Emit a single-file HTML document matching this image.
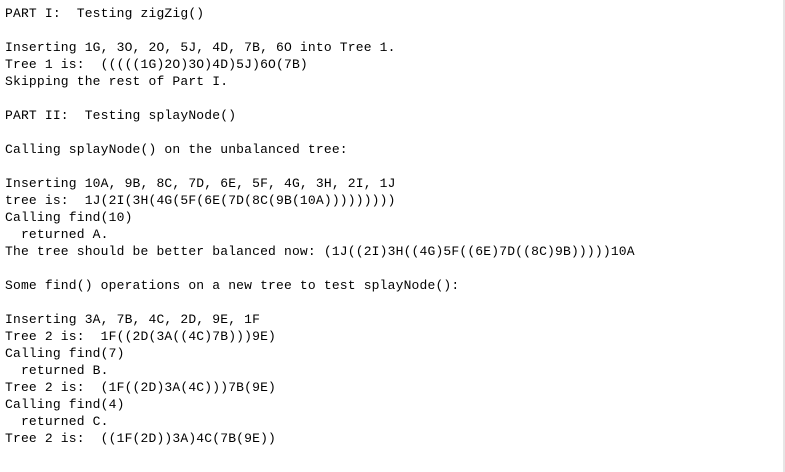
<!DOCTYPE html>
<html><head><meta charset="utf-8"><style>
html,body{margin:0;padding:0;background:#fff;width:785px;height:472px;overflow:hidden}
pre{margin:0;position:absolute;left:5px;top:5px;font-family:"Liberation Mono",monospace;font-size:13px;letter-spacing:0.17px;line-height:17px;color:#000}
.bar{position:absolute;right:0;top:0;width:2px;height:472px;background:#e6e6e6}
</style></head><body>
<pre>PART I:  Testing zigZig()

Inserting 1G, 3O, 2O, 5J, 4D, 7B, 6O into Tree 1.
Tree 1 is:  (((((1G)2O)3O)4D)5J)6O(7B)
Skipping the rest of Part I.

PART II:  Testing splayNode()

Calling splayNode() on the unbalanced tree:

Inserting 10A, 9B, 8C, 7D, 6E, 5F, 4G, 3H, 2I, 1J
tree is:  1J(2I(3H(4G(5F(6E(7D(8C(9B(10A)))))))))
Calling find(10)
  returned A.
The tree should be better balanced now: (1J((2I)3H((4G)5F((6E)7D((8C)9B)))))10A

Some find() operations on a new tree to test splayNode():

Inserting 3A, 7B, 4C, 2D, 9E, 1F
Tree 2 is:  1F((2D(3A((4C)7B)))9E)
Calling find(7)
  returned B.
Tree 2 is:  (1F((2D)3A(4C)))7B(9E)
Calling find(4)
  returned C.
Tree 2 is:  ((1F(2D))3A)4C(7B(9E))</pre>
<div class="bar"></div>
</body></html>
